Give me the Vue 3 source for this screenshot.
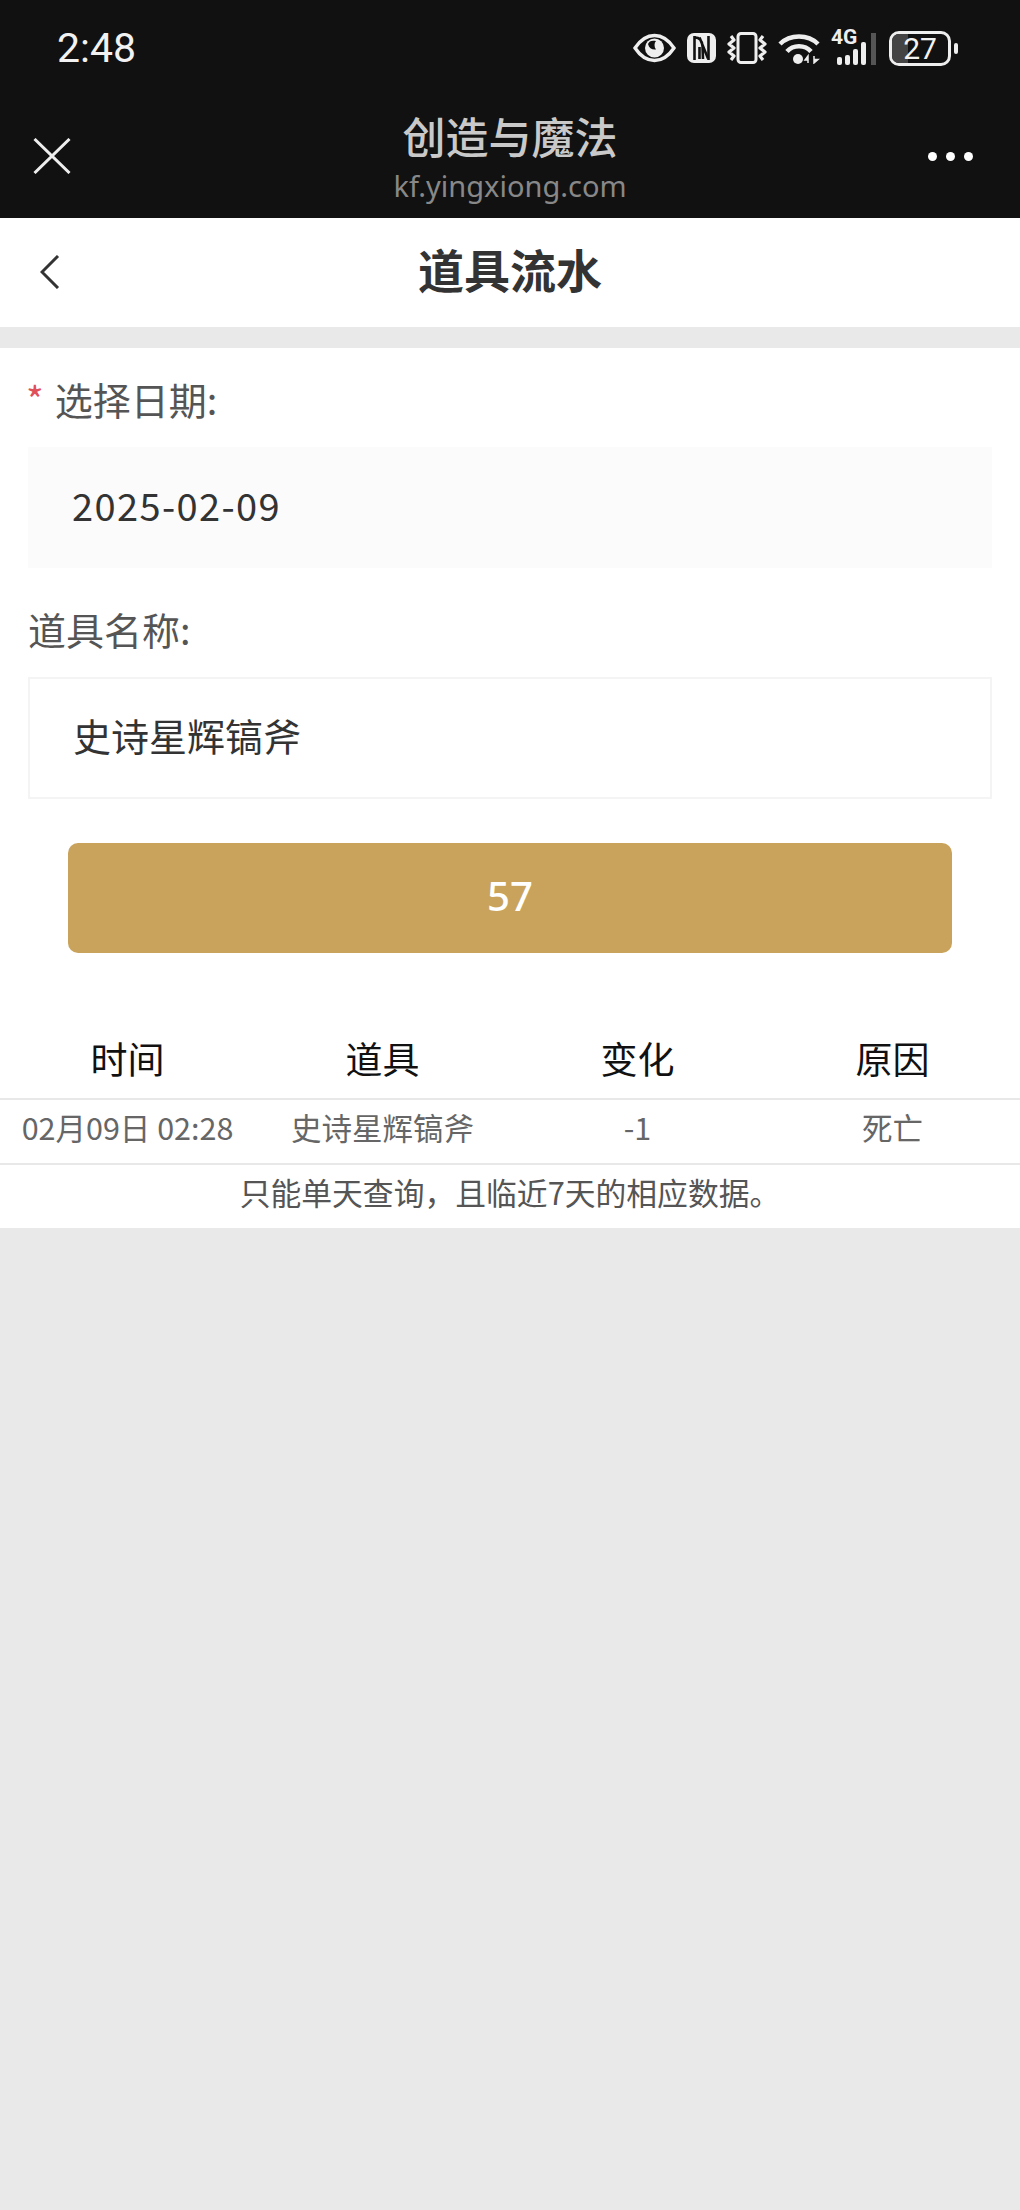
<template>
  <div class="page">
    <header class="topbar">
      <div class="status">
        <span class="clock">2:48</span>
        <div class="status-icons">
          <svg class="eye" width="43" height="30" viewBox="0 0 43 30">
            <path d="M2 15C8 6 14 2.500 21.500 2.500S35 6 41 15C35 24 29 27.500 21.500 27.500S8 24 2 15Z" fill="none" stroke="#eee" stroke-width="3.400" />
            <circle cx="21.500" cy="15" r="9.500" fill="#eee" />
            <path d="M15 11C16 15 19 17 23 16.500C21 14 21 10 23 8C19 7 16 8 15 11Z" fill="#111" />
          </svg>
          <svg class="nfc" width="29" height="30" viewBox="0 0 29 30">
            <rect x="0" y="0" width="29" height="30" rx="7" fill="#eee" />
            <path d="M7.500 3V27M21.500 3V27" stroke="#111" stroke-width="2.600" fill="none" />
            <path d="M8 4.500C13 4.500 15 8 15.500 13L16 26M12.500 4.500L21 25.500M12.500 14V26" stroke="#111" stroke-width="2.600" fill="none" />
          </svg>
          <svg class="vibrate" width="40" height="32" viewBox="0 0 40 32">
            <rect x="11" y="1.500" width="18" height="29" rx="3" fill="none" stroke="#eee" stroke-width="3" />
            <path d="M4 4L7 8L2 12L7 16L2 20L7 24L4 28M36 4L33 8L38 12L33 16L38 20L33 24L36 28" fill="none" stroke="#eee" stroke-width="3.200" stroke-linejoin="round" />
          </svg>
          <svg class="wifi" width="42" height="31" viewBox="0 0 42 31">
            <path d="M2 11C12 1 30 1 40 11" fill="none" stroke="#eee" stroke-width="4.500" />
            <path d="M9 18.500C15 11.500 27 11.500 33 18.500" fill="none" stroke="#eee" stroke-width="4.500" />
            <circle cx="20" cy="26" r="5" fill="#eee" />
            <path d="M30 23L27 27H30ZM30 23V30M36 30L40 26.500H36ZM36 23V30" fill="#eee" stroke="#eee" stroke-width="1.500" />
          </svg>
          <div class="signal">
            <span class="net">4G</span>
            <svg width="46" height="34" viewBox="0 0 46 34">
              <rect x="6" y="26" width="5" height="8" rx="2" fill="#eee" />
              <rect x="14" y="24" width="5" height="10" rx="2" fill="#eee" />
              <rect x="22" y="18" width="5" height="16" rx="2" fill="#eee" />
              <rect x="30" y="11" width="5" height="23" rx="2" fill="#eee" />
              <rect x="40" y="2" width="5" height="32" fill="#555" />
            </svg>
          </div>
          <div class="battery">
            <div class="battery-body">
              <span class="battery-fill"></span>
              <span class="battery-num">27</span>
            </div>
            <span class="battery-tip"></span>
          </div>
        </div>
      </div>
      <div class="webbar">
        <svg class="close" width="38" height="36" viewBox="0 0 38 36">
          <path d="M1.500 1L36.500 35M36.500 1L1.500 35" stroke="#eee" stroke-width="3" fill="none" />
        </svg>
        <div class="webtitle">
          <div class="site">创造与魔法</div>
          <div class="url">kf.yingxiong.com</div>
        </div>
        <div class="dots"><i></i><i></i><i></i></div>
      </div>
    </header>

    <nav class="nav">
      <svg class="back" width="20" height="34" viewBox="0 0 20 34">
        <path d="M18 1L2 17L18 33" stroke="#333" stroke-width="3" fill="none" />
      </svg>
      <h1>道具流水</h1>
    </nav>

    <section class="form">
      <div class="label"><span class="req">*</span>选择日期:</div>
      <div class="box date">2025-02-09</div>
      <div class="label second">道具名称:</div>
      <div class="box item">史诗星辉镐斧</div>
      <button class="submit">57</button>
    </section>

    <section class="list">
      <div class="row head">
        <span v-for="h in heads" :key="h">{{ h }}</span>
      </div>
      <div class="row body">
        <span v-for="c in cells" :key="c">{{ c }}</span>
      </div>
      <div class="note">只能单天查询，且临近7天的相应数据。</div>
    </section>
  </div>
</template>

<script setup>
const heads = ['时间', '道具', '变化', '原因']
const cells = ['02月09日 02:28', '史诗星辉镐斧', '-1', '死亡']
</script>

<style>
html, body {
  margin: 0;
  background: #e9e9e9;
}
</style>

<style scoped>
.page {
  width: 1020px;
  height: 2210px;
  background: #e9e9e9;
  font-family: "Noto Sans CJK SC", "Noto Sans", sans-serif;
  overflow: hidden;
}

.topbar {
  height: 218px;
  background: #111;
  color: #eee;
}

.status {
  height: 96px;
  display: flex;
  justify-content: space-between;
  align-items: center;
  padding: 0 62px 0 57px;
}

.clock {
  font-family: Roboto, sans-serif;
  font-size: 41px;
  font-weight: 400;
  color: #f2f2f2;
}

.status-icons {
  display: flex;
  align-items: center;
  gap: 11px;
}

.signal {
  position: relative;
  width: 46px;
  height: 34px;
}

.net {
  position: absolute;
  left: 0;
  top: -6px;
  font-family: Roboto, sans-serif;
  font-size: 21px;
  font-weight: 700;
  color: #eee;
}

.signal svg {
  display: block;
}

.battery {
  display: flex;
  align-items: center;
  gap: 3px;
  margin-left: 1px;
}

.battery-body {
  width: 62px;
  height: 35px;
  box-sizing: border-box;
  border: 3px solid #eee;
  border-radius: 10px;
  position: relative;
  overflow: hidden;
}

.battery-fill {
  position: absolute;
  left: 0;
  top: 0;
  bottom: 0;
  width: 16px;
  background: #444;
}

.battery-num {
  position: relative;
  display: block;
  text-align: center;
  font-family: Roboto, sans-serif;
  font-size: 30px;
  line-height: 29px;
  color: #f2f2f2;
}

.battery-tip {
  width: 4px;
  height: 11px;
  border-radius: 2px;
  background: #eee;
}

.webbar {
  height: 122px;
  display: flex;
  align-items: center;
  justify-content: space-between;
  padding: 0 47px 0 33px;
  position: relative;
}

.close {
  margin-top: -2px;
}

.webtitle {
  position: absolute;
  left: 0;
  right: 0;
  top: 16px;
  text-align: center;
}

.site {
  font-size: 43px;
  line-height: 46px;
  font-weight: 500;
  color: #c9c9c9;
}

.url {
  margin-top: 9px;
  font-family: "Noto Sans", sans-serif;
  font-size: 29px;
  line-height: 38px;
  color: #888;
}

.dots {
  display: flex;
  gap: 9px;
  margin-top: -2px;
}

.dots i {
  width: 9px;
  height: 9px;
  border-radius: 50%;
  background: #fff;
}

.nav {
  height: 109px;
  box-sizing: border-box;
  padding-bottom: 10px;
  background: #fff;
  display: flex;
  align-items: center;
  justify-content: center;
  position: relative;
}

.back {
  position: absolute;
  left: 40px;
  top: 37px;
}

.nav h1 {
  margin: 0;
  font-size: 46px;
  line-height: 60px;
  font-weight: 700;
  color: #333;
}

.form {
  margin-top: 21px;
  background: #fff;
  padding: 25px 28px 0;
  display: flow-root;
}

.label {
  font-size: 38px;
  line-height: 52px;
  color: #555;
  margin-bottom: 22px;
}

.label.second {
  margin-top: 35px;
  margin-bottom: 22px;
}

.req {
  color: #e0505a;
  margin-left: -2px;
  margin-right: 11px;
  font-size: 38px;
}

.box {
  display: flex;
  align-items: center;
  box-sizing: border-box;
  height: 122px;
  color: #333;
}

.date {
  height: 121px;
  background: #fbfbfb;
  padding: 0 0 6px 44px;
  font-size: 38px;
  letter-spacing: 1.400px;
}

.item {
  border: 2px solid #f4f4f4;
  padding: 0 0 8px 43px;
  font-size: 38px;
}

.submit {
  display: block;
  width: 884px;
  height: 110px;
  margin: 44px 40px 0;
  padding: 0 0 5px;
  border: 0;
  border-radius: 10px;
  background: #c9a35b;
  color: #fff;
  font-family: "Noto Sans", sans-serif;
  font-size: 40px;
  font-weight: 500;
}

.list {
  background: #fff;
  padding-top: 71px;
}

.row {
  display: grid;
  grid-template-columns: repeat(4, 255px);
  text-align: center;
  border-bottom: 2px solid #e8e8e8;
}

.head {
  height: 68px;
  padding-bottom: 6px;
  align-items: center;
  font-size: 37px;
  color: #111;
}

.body {
  height: 53px;
  padding-bottom: 10px;
  align-items: center;
  font-size: 30.500px;
  color: #666;
}

.note {
  height: 63px;
  line-height: 54px;
  text-align: center;
  font-size: 30.800px;
  color: #555;
}
</style>
